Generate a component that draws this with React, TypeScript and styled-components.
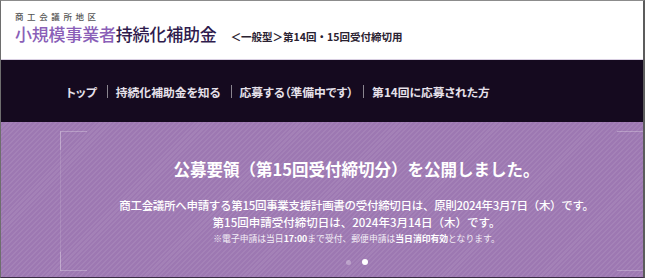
import * as React from 'react'
import styled, { createGlobalStyle } from 'styled-components'

const GlobalStyle = createGlobalStyle`
  html, body {
    margin: 0;
    padding: 0;
    background: #ffffff;
    overflow: hidden;
  }
  body {
    font-family: 'Noto Sans CJK JP', 'Noto Sans', sans-serif;
  }
`

const Page = styled.div`
  width: 645px;
  height: 278px;
  box-sizing: border-box;
  border-top: 1px solid #8c8c8c;
  border-left: 1px solid #6e6e6e;
  border-right: 2px solid #5c5c5c;
  border-bottom: 1px solid #3c2e46;
  display: flex;
  flex-direction: column;
  overflow: hidden;
`

const Header = styled.header`
  height: 59px;
  padding: 9px 0 0 14px;
  box-sizing: border-box;
  background: #ffffff;
  border-bottom: 1px solid #d9cfe2;
  flex: none;
`

const Office = styled.div`
  font-size: 8.5px;
  line-height: 12px;
  letter-spacing: 3.6px;
  color: #555;
  font-weight: 500;
`

const TitleRow = styled.div`
  display: flex;
  align-items: baseline;
  line-height: 24px;
`

const Title = styled.h1`
  margin: 0;
  font-size: 17px;
  font-weight: 500;
  letter-spacing: -0.2px;
  color: #2f1b4d;
`

const TitleAccent = styled.span`
  color: #8a5fb8;
`

const Edition = styled.span`
  margin-left: 14px;
  font-size: 10.5px;
  font-weight: 700;
  color: #2a2231;
`

const Nav = styled.nav`
  height: 62px;
  flex: none;
  background: #150a1f;
  display: flex;
  align-items: center;
  padding-left: 65px;
`

const NavLink = styled.a`
  font-size: 11.8px;
  font-weight: 700;
  color: #e6e1ea;
  text-decoration: none;
  font-feature-settings: 'palt';
`

const NavSep = styled.span`
  width: 1px;
  height: 13px;
  margin: 0 8px 0 10px;
  background: rgba(255, 255, 255, 0.5);
`

const Hero = styled.section`
  flex: 1;
  overflow: hidden;
  padding: 9px 0 0 59px;
  background-color: #9d78b2;
  background-image: repeating-linear-gradient(
    135deg,
    rgba(255, 255, 255, 0.07) 0px,
    rgba(255, 255, 255, 0.07) 1.5px,
    rgba(0, 0, 0, 0) 1.5px,
    rgba(0, 0, 0, 0) 3.5px
  );
`

const Frame = styled.div`
  position: relative;
  width: 592px;
  height: 140px;
  box-sizing: border-box;
  padding-top: 26px;
  border-left: 1px solid rgba(255, 255, 255, 0.12);
  display: flex;
  flex-direction: column;
  align-items: center;
  color: #ffffff;
`

const Corner = styled.span<{ right?: boolean; bottom?: boolean }>`
  position: absolute;
  width: 26px;
  height: 18px;
  ${({ right }) => (right ? 'right: 8px;' : 'left: -1px;')}
  ${({ bottom }) => (bottom ? 'bottom: 0;' : 'top: 0;')}
  ${({ right }) => (right ? 'border-right' : 'border-left')}: 1px solid
    rgba(255, 255, 255, 0.26);
  ${({ bottom }) => (bottom ? 'border-bottom' : 'border-top')}: 1px solid
    rgba(255, 255, 255, 0.26);
`

const Heading = styled.h2`
  margin: 0;
  font-size: 16.5px;
  line-height: 24px;
  font-weight: 700;
`

const Body = styled.p<{ first?: boolean }>`
  margin: ${({ first }) => (first ? '16px' : '0')} 0 0;
  font-size: 11.5px;
  line-height: 17px;
  font-weight: 500;
  letter-spacing: ${({ first }) => (first ? '-0.3px' : '0')};
`

const Note = styled.p`
  margin: 1px 0 0;
  font-size: 8.8px;
  line-height: 13px;
  font-weight: 400;
  color: #f3eef6;

  b {
    font-weight: 700;
    color: #ffffff;
  }
`

const Dots = styled.div`
  margin-top: 14px;
  display: flex;
  align-items: center;
  gap: 11px;
`

const Dot = styled.span<{ active?: boolean }>`
  width: ${({ active }) => (active ? 6 : 5)}px;
  height: ${({ active }) => (active ? 6 : 5)}px;
  border-radius: 50%;
  background: ${({ active }) =>
    active ? '#ffffff' : 'rgba(255, 255, 255, 0.3)'};
`

const navItems = [
  'トップ',
  '持続化補助金を知る',
  '応募する（準備中です）',
  '第14回に応募された方',
]

export default function App() {
  return (
    <>
      <GlobalStyle />
      <Page>
        <Header>
          <Office>商工会議所地区</Office>
          <TitleRow>
            <Title>
              <TitleAccent>小規模事業者</TitleAccent>持続化補助金
            </Title>
            <Edition>＜一般型＞第14回・15回受付締切用</Edition>
          </TitleRow>
        </Header>
        <Nav>
          {navItems.map((item, i) => (
            <React.Fragment key={item}>
              {i > 0 && <NavSep />}
              <NavLink href="#">{item}</NavLink>
            </React.Fragment>
          ))}
        </Nav>
        <Hero>
          <Frame>
            <Corner />
            <Corner bottom />
            <Corner right />
            <Corner right bottom />
            <Heading>公募要領（第15回受付締切分）を公開しました。</Heading>
            <Body first>
              商工会議所へ申請する第15回事業支援計画書の受付締切日は、原則2024年3月7日（木）です。
            </Body>
            <Body>第15回申請受付締切日は、2024年3月14日（木）です。</Body>
            <Note>
              ※電子申請は当日<b>17:00</b>まで受付、郵便申請は<b>当日消印有効</b>
              となります。
            </Note>
            <Dots>
              <Dot />
              <Dot active />
            </Dots>
          </Frame>
        </Hero>
      </Page>
    </>
  )
}
